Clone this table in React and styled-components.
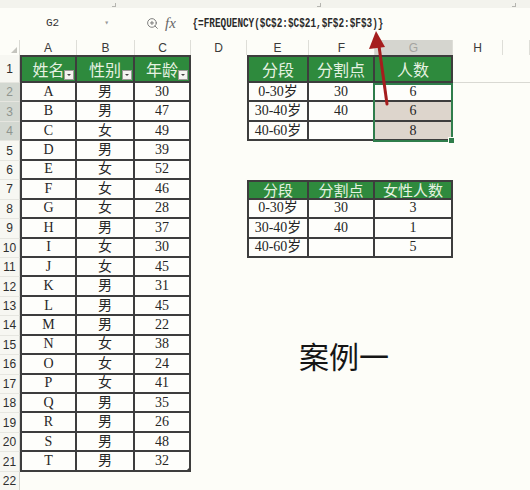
import styled, { createGlobalStyle } from "styled-components";
import { ZoomIn } from "lucide-react";

/* ---------------------------------------------------------------------------
   Global
--------------------------------------------------------------------------- */
const GlobalStyle = createGlobalStyle`
  html, body {
    margin: 0;
    background: #fdfdf8;
  }
  body {
    font-family: "Liberation Serif", "Noto Sans CJK SC", serif;
    color: #222;
  }
  * { box-sizing: border-box; }
`;

const LINE = "2px solid #3d3d3d";

/* ---------------------------------------------------------------------------
   Formula bar
--------------------------------------------------------------------------- */
const Page = styled.div`
  position: relative;
  width: 530px;
  height: 490px;
  overflow: hidden;
`;

const Ribbon = styled.div`
  height: 8px;
  background: #f3f3ed;
  display: flex;
`;

const RibbonGroup = styled.div`
  width: ${p => p.$w}px;
  position: relative;
  &::after {
    content: "";
    position: absolute;
    right: 0;
    bottom: 1px;
    width: 3px;
    height: 3px;
    border-right: 1px solid #b5b5b0;
    border-bottom: 1px solid #b5b5b0;
  }
`;

const FormulaBar = styled.div`
  height: 30px;
  display: flex;
  align-items: center;
  margin-bottom: 2px;
`;

const NameBox = styled.div`
  width: 115px;
  height: 22px;
  position: relative;
  display: flex;
  align-items: center;
  justify-content: center;
  padding-right: 10px;
  font-family: "Liberation Mono", monospace;
  font-size: 11px;
  color: #333;
`;

const Caret = styled.span`
  position: absolute;
  right: 6px;
  top: 6px;
  font-size: 8px;
  color: #999;
`;

const FxArea = styled.div`
  width: 76px;
  display: flex;
  align-items: center;
  gap: 6px;
  padding-left: 31px;
  color: #6c6c6c;
`;

const Fx = styled.span`
  font-family: "Liberation Serif", serif;
  font-style: italic;
  font-size: 15px;
  color: #666;
`;

const FormulaText = styled.div`
  flex: 1;
  padding-left: 2px;
  white-space: nowrap;
  font-family: "Liberation Mono", monospace;
  font-weight: bold;
  font-size: 13px;
  color: #2a2a2a;
  transform: scaleX(0.72);
  transform-origin: left center;
`;

/* ---------------------------------------------------------------------------
   Sheet grid
--------------------------------------------------------------------------- */
const Sheet = styled.div`
  display: grid;
  grid-template-columns: 20px 57px 58px 56px 56px 62px 66px 78px 50px 1fr;
  grid-template-rows: 15px 28px repeat(21, 19.45px);
`;

const Corner = styled.div`
  grid-column: 1;
  grid-row: 1;
  position: relative;
  border-right: 1px solid #dadad4;
  &::after {
    content: "";
    position: absolute;
    right: 2px;
    bottom: 2px;
    border-left: 6px solid transparent;
    border-bottom: 6px solid #c4c4be;
  }
`;

const ColHeader = styled.div`
  grid-row: 1;
  grid-column: ${p => p.$col};
  display: flex;
  align-items: center;
  justify-content: center;
  font-family: "Liberation Sans", sans-serif;
  font-size: 12px;
  color: ${p => (p.$selected ? "#a4a4a0" : "#3a3a3a")};
  background: ${p => (p.$selected ? "#d5d5cf" : "transparent")};
  border-right: 1px solid #deded8;
`;

const RowHeader = styled.div`
  grid-column: 1;
  grid-row: ${p => p.$row};
  display: flex;
  align-items: center;
  justify-content: center;
  font-family: "Liberation Sans", sans-serif;
  font-size: 12px;
  color: ${p => (p.$selected ? "#8f958f" : "#2e2e2e")};
  background: ${p => (p.$selected ? "#d3d8d1" : "#f7f7f2")};
  border-right: 1px solid #d4d4ce;
  border-bottom: 1px solid #e6e6e0;
`;

const GridLine = styled.div`
  grid-column: 9 / 11;
  grid-row: 2;
  border-bottom: 1px solid #d9d9d3;
`;

const Table = styled.div`
  position: relative;
  grid-column: ${p => p.$col};
  grid-row: ${p => p.$row};
  display: grid;
  grid-template-columns: ${p => p.$cols};
  grid-template-rows: ${p => p.$rows};
`;

const Cell = styled.div`
  position: relative;
  display: flex;
  align-items: center;
  justify-content: center;
  line-height: 1;
  border-right: ${LINE};
  border-bottom: ${LINE};
  border-left: ${p => (p.$first ? LINE : "none")};
  border-top: ${p => (p.$top ? LINE : "none")};
  background: ${p => (p.$head ? "#2e8a3d" : p.$shade ? "#ddd5cc" : "#fefefb")};
  color: ${p => (p.$head ? "#e6f2e2" : "#262626")};
  font-size: ${p => (p.$head ? `${p.$size || 16}px` : "14px")};
  font-family: ${p =>
    p.$head
      ? '"Noto Sans CJK SC", sans-serif'
      : '"Liberation Serif", "Noto Sans CJK SC", serif'};
`;

const FilterButton = styled.span`
  position: absolute;
  right: 1px;
  bottom: 1px;
  width: 10px;
  height: 10px;
  background: #f4f4f1;
  border: 1px solid #9a9a96;
  &::after {
    content: "";
    position: absolute;
    left: 2px;
    top: 3px;
    border-left: 2px solid transparent;
    border-right: 2px solid transparent;
    border-top: 2px solid #444;
  }
`;

const ResizeMark = styled.span`
  position: absolute;
  right: -1px;
  bottom: -1px;
  border-left: 4px solid transparent;
  border-bottom: 4px solid #3d3d3d;
`;

const Selection = styled.div`
  position: absolute;
  left: 126px;
  top: 28px;
  width: 80px;
  height: 59px;
  border: 2px solid #2f7d4b;
  pointer-events: none;
  &::after {
    content: "";
    position: absolute;
    right: -4px;
    bottom: -4px;
    width: 5px;
    height: 5px;
    background: #2f7d4b;
    border: 1px solid #fdfdf8;
  }
`;

const CaseTitle = styled.div`
  grid-column: 6 / 9;
  grid-row: 16 / 18;
  display: flex;
  align-items: center;
  justify-content: center;
  padding-right: 12px;
  font-family: "Noto Sans CJK SC", sans-serif;
  font-size: 30px;
  color: #151515;
`;

const Arrow = styled.svg`
  position: absolute;
  left: 0;
  top: 0;
  pointer-events: none;
`;

/* ---------------------------------------------------------------------------
   Data
--------------------------------------------------------------------------- */
const people = [
  ["A", "男", 30], ["B", "男", 47], ["C", "女", 49], ["D", "男", 39],
  ["E", "女", 52], ["F", "女", 46], ["G", "女", 28], ["H", "男", 37],
  ["I", "女", 30], ["J", "女", 45], ["K", "男", 31], ["L", "男", 45],
  ["M", "男", 22], ["N", "女", 38], ["O", "女", 24], ["P", "女", 41],
  ["Q", "男", 35], ["R", "男", 26], ["S", "男", 48], ["T", "男", 32],
];

const letters = ["A", "B", "C", "D", "E", "F", "G", "H", ""];

const freqRows = [
  ["0-30岁", "30", "6"],
  ["30-40岁", "40", "6"],
  ["40-60岁", "", "8"],
];

const femaleRows = [
  ["0-30岁", "30", "3"],
  ["30-40岁", "40", "1"],
  ["40-60岁", "", "5"],
];

/* ---------------------------------------------------------------------------
   App
--------------------------------------------------------------------------- */
export default function App() {
  return (
    <Page>
      <GlobalStyle />

      <Ribbon>
        <RibbonGroup $w={116} />
        <RibbonGroup $w={205} />
        <RibbonGroup $w={195} />
      </Ribbon>

      <FormulaBar>
        <NameBox>
          G2
          <Caret>▾</Caret>
        </NameBox>
        <FxArea>
          <ZoomIn size={13} strokeWidth={1.6} />
          <Fx>fx</Fx>
        </FxArea>
        <FormulaText>{"{=FREQUENCY($C$2:$C$21,$F$2:$F$3)}"}</FormulaText>
      </FormulaBar>

      <Sheet>
        <Corner />
        {letters.map((l, i) => (
          <ColHeader key={i} $col={i + 2} $selected={l === "G"}>
            {l}
          </ColHeader>
        ))}

        {Array.from({ length: 22 }, (_, i) => (
          <RowHeader key={i} $row={i + 2} $selected={i >= 1 && i <= 3}>
            {i + 1}
          </RowHeader>
        ))}

        <GridLine />

        {/* 姓名 / 性别 / 年龄 */}
        <Table $col="2 / 5" $row="2 / 23" $cols="57px 58px 56px" $rows="28px repeat(20, 19.45px)">
          {["姓名", "性别", "年龄"].map((h, i) => (
            <Cell key={h} $head $top $first={i === 0}>
              {h}
              <FilterButton />
            </Cell>
          ))}
          {people.map(([name, sex, age], r) => [
            <Cell key={name + "n"} $first>{name}</Cell>,
            <Cell key={name + "s"}>{sex}</Cell>,
            <Cell key={name + "a"}>
              {age}
              {r === people.length - 1 && <ResizeMark />}
            </Cell>,
          ])}
        </Table>

        {/* FREQUENCY */}
        <Table $col="6 / 9" $row="2 / 6" $cols="62px 66px 78px" $rows="28px repeat(3, 19.45px)">
          {["分段", "分割点", "人数"].map((h, i) => (
            <Cell key={h} $head $top $first={i === 0}>{h}</Cell>
          ))}
          {freqRows.map(([seg, cut, n], r) => [
            <Cell key={seg + "s"} $first>{seg}</Cell>,
            <Cell key={seg + "c"}>{cut}</Cell>,
            <Cell key={seg + "n"} $shade={r > 0}>{n}</Cell>,
          ])}
          <Selection />
        </Table>

        {/* 女性人数 */}
        <Table $col="6 / 9" $row="8 / 12" $cols="62px 66px 78px" $rows="repeat(4, 19.45px)">
          {["分段", "分割点", "女性人数"].map((h, i) => (
            <Cell key={h} $head $top $size={15} $first={i === 0}>{h}</Cell>
          ))}
          {femaleRows.map(([seg, cut, n]) => [
            <Cell key={seg + "s"} $first>{seg}</Cell>,
            <Cell key={seg + "c"}>{cut}</Cell>,
            <Cell key={seg + "n"}>{n}</Cell>,
          ])}
        </Table>

        <CaseTitle>案例一</CaseTitle>
      </Sheet>

      <Arrow width="530" height="490" viewBox="0 0 530 490">
        <line x1="387" y1="104" x2="379" y2="46" stroke="#a51d1d" strokeWidth="3" strokeLinecap="round" />
        <polygon points="376,31 369,49 385,47" fill="#a51d1d" />
      </Arrow>
    </Page>
  );
}
